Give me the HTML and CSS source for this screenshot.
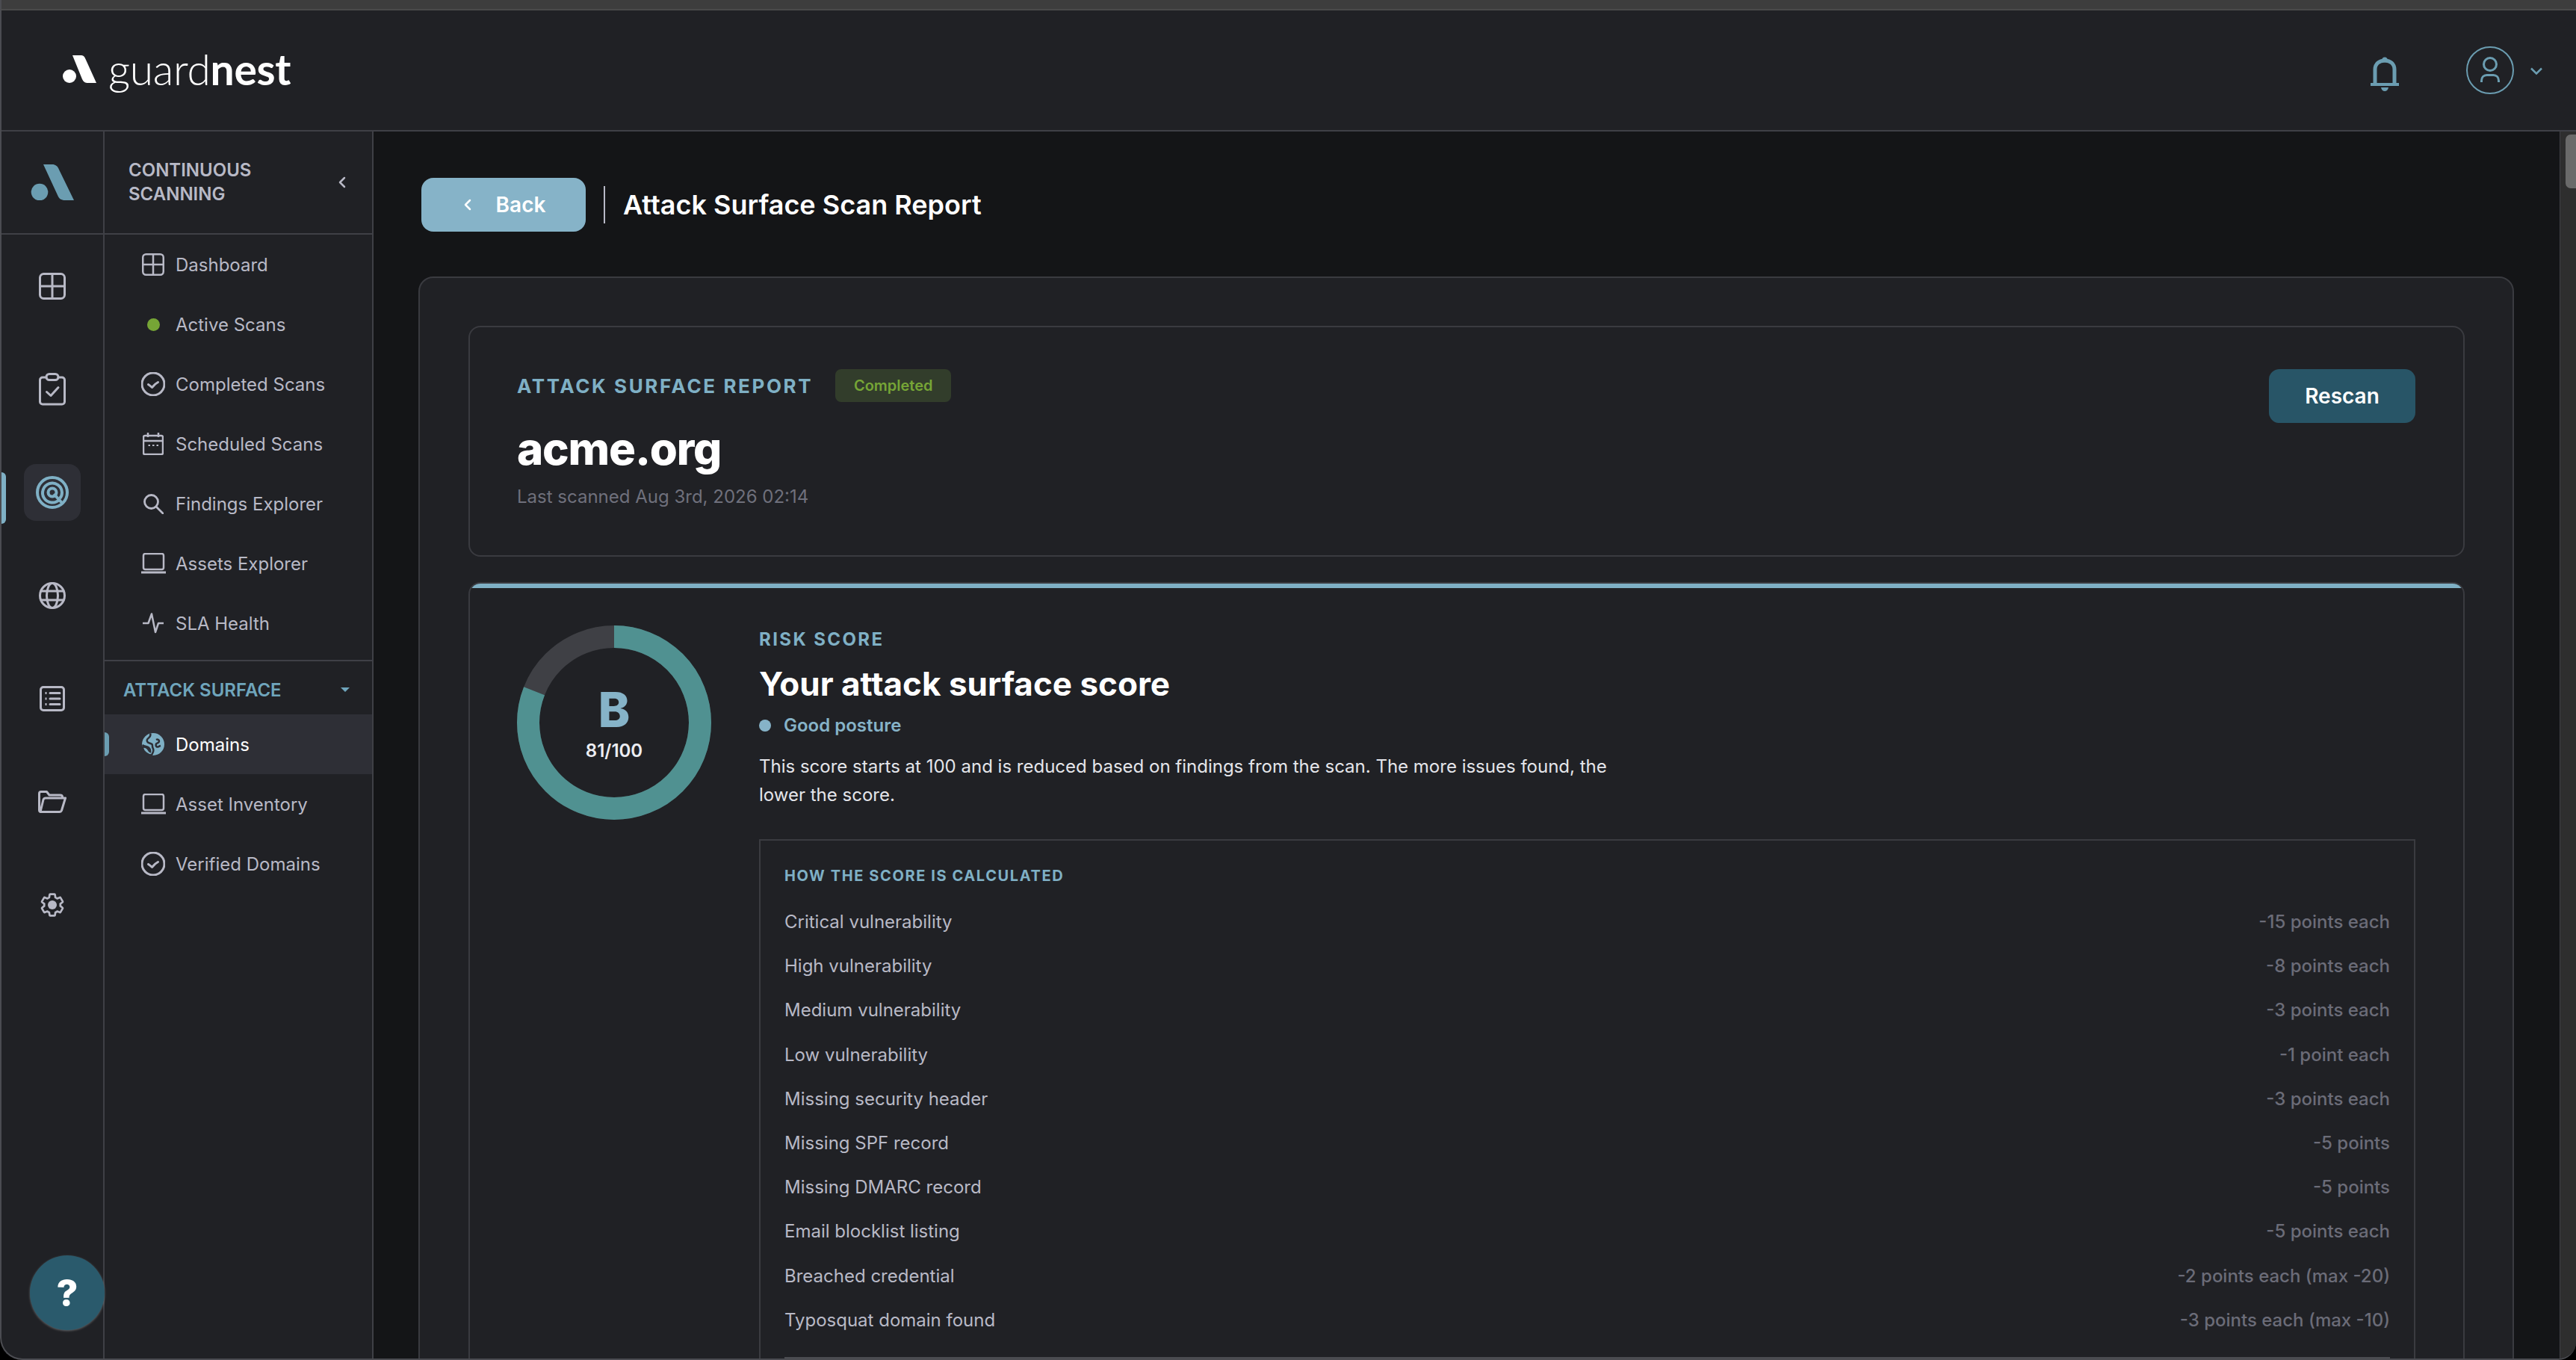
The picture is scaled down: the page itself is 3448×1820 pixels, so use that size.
FILE: index.html
```html
<!DOCTYPE html>
<html lang="en">
<head>
<meta charset="utf-8">
<title>Attack Surface Scan Report</title>
<link rel="stylesheet" href="styles.css">
</head>
<body>
<svg class="defs" aria-hidden="true">
  <symbol id="i-grid" viewBox="0 0 36 36"><rect x="1.5" y="1.5" width="33" height="33" rx="5"/><path d="M18 2v32M2 18h32"/></symbol>
  <symbol id="i-check" viewBox="0 0 32 32"><circle cx="16" cy="16" r="15"/><path d="M9.5 16.5c2 1.2 3.5 2.6 5 4 2.2-3 4.5-5.2 8-7"/></symbol>
  <symbol id="i-laptop" viewBox="0 0 33 28"><rect x="3" y="1" width="27" height="21" rx="2.5"/><path d="M0 26h33" stroke-width="3"/></symbol>
  <symbol id="i-chev" viewBox="0 0 16 16"><path d="M11 2 5 8l6 6"/></symbol>
</svg>
<div class="window">
  <div class="topstrip"></div>
  <header class="topbar">
    <div class="brand">
      <svg class="brand-mark" viewBox="0 0 46 38" fill="#fff"><circle cx="9" cy="29" r="9"/><path d="M13 1h11c3 0 5 1 6.500 5L45 38H34c-4 0-6-1-8-5z"/></svg>
      <span class="brand-name">guard<b>nest</b></span>
    </div>
    <div class="topbar-actions">
      <svg class="bell" viewBox="0 0 38 47"><path class="bell-body" d="M6 37V17C6 9.500 11.500 5 19 5s13 4.500 13 12v20"/><path class="bell-base" d="M0 37h38"/><circle class="bell-fill" cx="19" cy="4" r="3.600"/><path class="bell-fill" d="M14 41h10c-.5 3-2.500 5-5 5s-4.500-2-5-5z"/></svg>
      <svg class="avatar" viewBox="0 0 64 64"><circle cx="32" cy="32" r="31"/><circle cx="32" cy="24" r="8.500"/><path d="M20.500 48v-2c0-4.500 3-7.500 7-7.500h9c4 0 7 3 7 7.500v2"/></svg>
      <svg class="caret-down" viewBox="0 0 16 10"><path d="M1 1.500 8 8.500l7-7"/></svg>
    </div>
  </header>
  <div class="body">
    <nav class="rail">
      <div class="rail-logo">
        <svg class="rail-mark" viewBox="0 0 58 48"><circle cx="12" cy="37" r="11.300"/><path d="M17 0h12c4 0 7 2 9 7l20 41H46c-5 0-8-2-10-7z"/></svg>
      </div>
      <div class="rail-item"><svg class="ic ic36"><use href="#i-grid"/></svg></div>
      <div class="rail-item">
        <svg class="ic ic-clip" viewBox="0 0 36 44"><path d="M10 6H5a3.500 3.500 0 0 0-3.500 3.500v29A3.500 3.500 0 0 0 5 42h26a3.500 3.500 0 0 0 3.500-3.500v-29A3.500 3.500 0 0 0 31 6h-5"/><rect x="10" y="1.500" width="16" height="8" rx="4"/><path d="M10.500 25.500l5.500 5 10-11" stroke-width="4"/></svg>
      </div>
      <div class="rail-item is-active">
        <span class="rail-bar"></span>
        <span class="rail-chip"><svg class="radar" viewBox="0 0 44 44"><circle cx="22" cy="22" r="20"/><path d="M31.500 31.500A13 13 0 1 1 35 22c0 3-1 6-3 8"/><circle cx="22" cy="22" r="5.500"/><path d="M24 24l11 12"/></svg></span>
      </div>
      <div class="rail-item">
        <svg class="ic ic36" viewBox="0 0 36 36"><circle cx="18" cy="18" r="16.500"/><ellipse cx="18" cy="18" rx="7.500" ry="16.500"/><path d="M3 12h30M3 24h30"/></svg>
      </div>
      <div class="rail-item">
        <svg class="ic ic-list" viewBox="0 0 34 34"><rect x="1.500" y="1.500" width="31" height="31" rx="3.500"/><path d="M14 9.500h13M14 17h13M14 24.500h13"/><path class="dots" d="M7.500 8h2v3h-2zM7.500 15.500h2v3h-2zM7.500 23h2v3h-2z"/></svg>
      </div>
      <div class="rail-item">
        <svg class="ic ic-folder" viewBox="0 0 38 30"><path d="M3 28c-1 0-1.500-.8-1.500-2V4c0-1.500 1-2.500 2.500-2.500h7.500L15 6h14.500c2 0 3 1 3 2.500V9"/><path d="M3 28.500h25.500c1.500 0 2.500-.8 3-2L36.500 10H10c-1.500 0-2.500.8-3 2z"/></svg>
      </div>
      <div class="rail-item">
        <svg class="ic ic36" viewBox="0 0 24 24"><path class="gear" d="M19.140 12.940c.04-.3.06-.61.06-.94 0-.32-.02-.64-.07-.94l2.030-1.580c.18-.14.23-.41.12-.61l-1.920-3.320c-.12-.22-.37-.29-.59-.22l-2.390.96c-.5-.38-1.030-.7-1.620-.94l-.36-2.540c-.04-.24-.24-.41-.48-.41h-3.840c-.24 0-.43.17-.47.41l-.36 2.540c-.59.24-1.130.57-1.620.94l-2.390-.96c-.22-.08-.47 0-.59.22L2.740 8.870c-.12.21-.08.47.12.61l2.030 1.580c-.05.3-.09.63-.09.94s.02.64.07.94l-2.030 1.580c-.18.14-.23.41-.12.61l1.920 3.320c.12.22.37.29.59.22l2.390-.96c.5.38 1.030.7 1.620.94l.36 2.540c.05.24.24.41.48.41h3.840c.24 0 .44-.17.47-.41l.36-2.540c.59-.24 1.130-.56 1.620-.94l2.390.96c.22.08.47 0 .59-.22l1.920-3.320c.12-.22.07-.47-.12-.61z"/><circle class="dots" cx="12" cy="12" r="4"/></svg>
      </div>
      <button class="help">?</button>
    </nav>
    <aside class="subnav">
      <div class="subnav-head">
        <span>CONTINUOUS<br>SCANNING</span>
        <svg class="ic collapse"><use href="#i-chev"/></svg>
      </div>
      <ul class="navlist">
        <li class="navitem"><span class="navicon"><svg class="ic ic30"><use href="#i-grid"/></svg></span>Dashboard</li>
        <li class="navitem"><span class="navicon"><span class="live-dot"></span></span>Active Scans</li>
        <li class="navitem"><span class="navicon"><svg class="ic ic32"><use href="#i-check"/></svg></span>Completed Scans</li>
        <li class="navitem"><span class="navicon"><svg class="ic ic-cal" viewBox="0 0 28 30"><rect x="1" y="4" width="26" height="25" rx="2"/><path d="M1 11h26M7 0v6M21 0v6"/><path class="dashes" d="M7.500 17h2.500M13 17h2.500M18.500 17H21"/></svg></span>Scheduled Scans</li>
        <li class="navitem"><span class="navicon"><svg class="ic ic-search" viewBox="0 0 27 27"><circle cx="10.500" cy="10.500" r="9"/><path d="M17 17l9 9"/></svg></span>Findings Explorer</li>
        <li class="navitem"><span class="navicon"><svg class="ic ic-laptop"><use href="#i-laptop"/></svg></span>Assets Explorer</li>
        <li class="navitem"><span class="navicon"><svg class="ic ic-pulse" viewBox="0 0 28 28"><path d="M0 14h7.500L12 1.500 17 26l4-12h7"/></svg></span>SLA Health</li>
      </ul>
      <div class="section-head">
        <span>ATTACK SURFACE</span>
        <svg class="section-caret" viewBox="0 0 12 6"><path d="M0 0h12L6 6z"/></svg>
      </div>
      <ul class="navlist">
        <li class="navitem is-current"><span class="navmark"></span><span class="navicon"><svg class="ic30 globe-fill" viewBox="0 0 30 30"><circle cx="15" cy="15" r="15"/><path d="M11 .5c1 2.500 0 4.500-2 6-2.500 1.500-3 4-1 6 2 1.500 4 1 5.500 2.500 1 1.500 0 3 1 5 1 1.500 1 3.500.5 5l-2 4.500C7 29.500 2 25 .5 19 3 18 6 19 7.500 20.500 9 22 9 24 11 25c.5-2-.5-4-2-5.500C7 18 4 18 .5 16" class="globe-cut"/><path d="M19 9c2-1 4 0 4 2s-2 2-3.500 3c-1.500 1.500-1 3.500.5 4.500 1.500.5 3-1 5-1.500" class="globe-cut"/></svg></span>Domains</li>
        <li class="navitem"><span class="navicon"><svg class="ic ic-laptop"><use href="#i-laptop"/></svg></span>Asset Inventory</li>
        <li class="navitem"><span class="navicon"><svg class="ic ic32"><use href="#i-check"/></svg></span>Verified Domains</li>
      </ul>
    </aside>
    <main class="main">
      <div class="pagehead">
        <button class="back"><svg class="ic back-chev"><use href="#i-chev"/></svg>Back</button>
        <span class="vr"></span>
        <h1 class="pagetitle">Attack Surface Scan Report</h1>
      </div>
      <section class="panel">
        <div class="card card-head">
          <div class="head-text">
            <div class="head-meta">
              <span class="eyebrow">ATTACK SURFACE REPORT</span>
              <span class="badge">Completed</span>
            </div>
            <h2 class="domain">acme.org</h2>
            <p class="scanned">Last scanned Aug 3rd, 2026 02:14</p>
          </div>
          <button class="rescan">Rescan</button>
        </div>
        <div class="card card-score">
          <div class="score-strip"></div>
          <div class="score-body">
            <div class="donut">
              <svg class="donut-svg" viewBox="0 0 260 260">
                <circle class="donut-track" cx="130" cy="130" r="115"/>
                <circle class="donut-value" cx="130" cy="130" r="115" pathLength="100" stroke-dasharray="81 100"/>
              </svg>
              <div class="donut-label">
                <span class="grade">B</span>
                <span class="points">81/100</span>
              </div>
            </div>
            <div class="score-text">
              <div class="eyebrow small">RISK SCORE</div>
              <h3 class="score-title">Your attack surface score</h3>
              <div class="posture"><span class="posture-dot"></span>Good posture</div>
              <p class="score-desc">This score starts at 100 and is reduced based on findings from the scan. The more issues found, the lower the score.</p>
              <div class="calc">
                <div class="calc-title">HOW THE SCORE IS CALCULATED</div>
                <div class="calc-row"><span>Critical vulnerability</span><span class="pts">-15 points each</span></div>
                <div class="calc-row"><span>High vulnerability</span><span class="pts">-8 points each</span></div>
                <div class="calc-row"><span>Medium vulnerability</span><span class="pts">-3 points each</span></div>
                <div class="calc-row"><span>Low vulnerability</span><span class="pts">-1 point each</span></div>
                <div class="calc-row"><span>Missing security header</span><span class="pts">-3 points each</span></div>
                <div class="calc-row"><span>Missing SPF record</span><span class="pts">-5 points</span></div>
                <div class="calc-row"><span>Missing DMARC record</span><span class="pts">-5 points</span></div>
                <div class="calc-row"><span>Email blocklist listing</span><span class="pts">-5 points each</span></div>
                <div class="calc-row"><span>Breached credential</span><span class="pts">-2 points each (max -20)</span></div>
                <div class="calc-row"><span>Typosquat domain found</span><span class="pts">-3 points each (max -10)</span></div>
                <div class="calc-total"></div>
              </div>
            </div>
          </div>
        </div>
      </section>
    </main>
    <div class="scrollbar"><div class="thumb"></div></div>
  </div>
</div>
</body>
</html>
```
FILE: styles.css
```css
* { box-sizing: border-box; }
html, body { margin: 0; height: 100%; overflow: hidden; background: #000; }
body { font-family: Inter, "Liberation Sans", sans-serif; color: #b8b9c6; font-size: 24px; }
h1, h2, h3, p, ul { margin: 0; padding: 0; }
ul { list-style: none; }
button { font-family: inherit; border: 0; cursor: pointer; }
.defs { display: none; }

.window {
  height: 100vh; display: flex; flex-direction: column; overflow: hidden;
  background: #202125; border-left: 2px solid #4b4c51; border-bottom: 2px solid #4b4c51;
  border-radius: 0 0 24px 30px;
}
.topstrip { height: 14px; flex: none; margin-left: -2px; background: #3d3d3d; border-bottom: 2px solid #4a4a4a; }

.topbar {
  height: 162px; flex: none; display: flex; align-items: center; justify-content: space-between;
  border-bottom: 2px solid #3f4046; padding: 0 45px 0 82px; background: #202125;
}
.brand { display: flex; align-items: center; gap: 15px; margin-bottom: 4px; }
.brand-mark { width: 46px; height: 38px; }
.brand-name { font-family: Lato, sans-serif; font-weight: 300; font-size: 57px; line-height: 60px; color: #fff; letter-spacing: -.3px; }
.brand-name b { font-weight: 700; }
.topbar-actions { display: flex; align-items: center; }
.bell { width: 38px; height: 47px; fill: none; margin-right: 90px; margin-top: 10px; }
.bell-body { stroke: #6b9db1; stroke-width: 5; }
.bell-base { stroke: #6b9db1; stroke-width: 4; }
.bell-fill { fill: #6b9db1; }
.avatar { width: 64px; height: 64px; fill: none; stroke: #6b9db1; stroke-width: 2; margin-right: 22px; }
.avatar circle + circle, .avatar path { stroke-width: 3; }
.caret-down { width: 16px; height: 10px; fill: none; stroke: #6b9db1; stroke-width: 2.500; margin-top: 2px; }

.body { flex: 1; min-height: 0; display: flex; }

.rail { width: 138px; flex: none; border-right: 2px solid #3f4046; position: relative; }
.rail-logo { height: 138px; border-bottom: 2px solid #3f4046; display: flex; align-items: center; justify-content: center; }
.rail-mark { width: 58px; height: 48px; fill: #6b9db1; margin-left: 0; }
.rail-item { height: 138px; display: flex; align-items: center; justify-content: center; position: relative; color: #b8b9c6; }
.rail-bar { position: absolute; left: -2px; top: 42px; width: 8px; height: 69px; background: #7fb0c5; border-radius: 0 6px 6px 0; }
.rail-chip { width: 76px; height: 76px; border-radius: 16px; background: #2e2f36; display: flex; align-items: center; justify-content: center; }
.radar { width: 44px; height: 44px; fill: none; stroke: #7fb0c5; stroke-width: 4; }
.ic { fill: none; stroke: currentColor; stroke-width: 3; stroke-linecap: round; stroke-linejoin: round; }
.ic36 { width: 36px; height: 36px; }
.ic30 { width: 30px; height: 30px; }
.ic32 { width: 32px; height: 32px; }
.ic-clip { width: 36px; height: 44px; }
.ic-list { width: 34px; height: 34px; }
.ic-folder { width: 38px; height: 30px; }
.ic-cal { width: 28px; height: 30px; stroke-width: 2.500; stroke-linecap: butt; }
.ic-search { width: 27px; height: 27px; stroke-width: 2.800; }
.ic-laptop { width: 33px; height: 28px; stroke-width: 2.500; stroke-linecap: butt; }
.ic-pulse { width: 28px; height: 28px; stroke-width: 2.500; }
.ic-clip path, .ic-clip rect { stroke-width: 3; }
.dots { fill: currentColor; stroke: none; }
.dashes { stroke-width: 2; stroke-linecap: butt; }
.gear { stroke-width: 1.800; }
.help {
  position: absolute; left: 38px; bottom: 38px; width: 100px; height: 100px; z-index: 3;
  border-radius: 50%; background: #2a5a6c; color: #fff; font-size: 50px; font-weight: 800; line-height: 100px; padding: 0;
  box-shadow: 0 1px 3px rgba(255,255,255,.3);
}

.subnav { width: 360px; flex: none; border-right: 2px solid #3f4046; }
.subnav-head {
  height: 138px; border-bottom: 2px solid #3f4046; display: flex; align-items: center; justify-content: space-between;
  padding: 0 32px 0 32px; font-weight: 600; line-height: 32px; letter-spacing: 0; color: #b8b9c6;
}
.collapse { width: 16px; height: 16px; stroke-width: 2.500; }
.navitem { height: 80px; display: flex; align-items: center; position: relative; color: #b8b9c6; font-size: 24px; letter-spacing: 0; margin-top: 0; }
.navicon { width: 94px; flex: none; padding-left: 36px; display: flex; align-items: center; justify-content: center; margin-right: 1px; }
.navlist:first-of-type { padding-bottom: 9px; border-bottom: 2px solid #3f4046; }
.live-dot { width: 17px; height: 17px; border-radius: 50%; background: #76a536; }
.section-head {
  height: 71px; padding: 5px 30px 0 25px; display: flex; align-items: center; justify-content: space-between;
  color: #6fa5bc; font-weight: 600; font-size: 24px;
}
.section-caret { width: 12px; height: 6px; fill: #6fa5bc; }
.navitem.is-current { background: #2e2f36; color: #fff; }
.navmark { position: absolute; left: 0; top: 24px; width: 6px; height: 32px; background: #6b9db1; border-radius: 0 6px 6px 0; }
.globe-fill { fill: #7fb0c5; }
.globe-cut { fill: none; stroke: #2e2f36; stroke-width: 2.500; }

.main { flex: 1; min-width: 0; background: #141517; padding: 62px 61px 0 60px; overflow: hidden; }
.pagehead { display: flex; align-items: center; height: 72px; margin-left: 4px; margin-bottom: 60px; }
.back {
  width: 220px; height: 72px; border-radius: 16px; background: #86b3c8; color: #fff; font-size: 28px; font-weight: 600;
  display: flex; align-items: center; justify-content: center; gap: 30px;
}
.back-chev { width: 16px; height: 16px; stroke-width: 2.500; }
.vr { width: 2px; height: 50px; background: #b8b9c6; margin: 0 24px; }
.pagetitle { font-size: 36px; font-weight: 600; color: #fff; }

.panel { background: #202125; border: 2px solid #3a3b40; border-radius: 20px; padding: 64px 64px 0 65px; display: flex; flex-direction: column; gap: 34px; }
.card { border: 2px solid #3a3b40; border-radius: 16px; background: #202125; overflow: hidden; }
.card-head { height: 309px; padding: 56px 64px 0 63px; display: flex; justify-content: space-between; align-items: flex-start; }
.head-meta { display: flex; align-items: center; gap: 30px; height: 44px; }
.eyebrow { color: #7fb0c5; font-weight: 700; font-size: 26px; letter-spacing: .1em; }
.eyebrow.small { font-size: 24px; line-height: 30px; }
.badge { height: 44px; width: 155px; display: flex; align-items: center; justify-content: center; border-radius: 8px; background: #323d2b; color: #76a536; font-size: 20px; font-weight: 600; }
.domain { font-size: 60px; font-weight: 800; color: #fff; line-height: 72px; letter-spacing: -.02em; margin-top: 26px; }
.scanned { color: #6f707c; font-size: 24px; line-height: 30px; margin-top: 14px; }
.rescan { width: 196px; height: 72px; border-radius: 14px; background: #285567; color: #fff; font-size: 28px; font-weight: 600; }

.card-score { flex: 1; }
.score-strip { height: 6px; background: #7fb0c5; }
.score-body { display: flex; gap: 64px; padding: 50px 64px 0 63px; }
.donut { width: 260px; height: 260px; flex: none; position: relative; }
.donut-svg { width: 260px; height: 260px; fill: none; display: block; transform: rotate(-90deg); }
.donut-track { stroke: #3f4045; stroke-width: 30; }
.donut-value { stroke: #509191; stroke-width: 30; }
.donut-label { position: absolute; inset: 0; display: flex; flex-direction: column; align-items: center; justify-content: center; }
.grade { font-size: 64px; font-weight: 800; color: #86b3c8; line-height: 72px; }
.points { font-size: 24px; font-weight: 600; color: #ecedf2; line-height: 30px; margin-top: 4px; }
.score-text { flex: 1; min-width: 0; padding-top: 4px; }
.score-title { font-size: 44px; font-weight: 700; color: #fff; line-height: 56px; margin-top: 16px; }
.posture { display: flex; align-items: center; gap: 17px; color: #86b3c8; font-size: 24px; font-weight: 600; line-height: 30px; margin-top: 13px; }
.posture-dot { width: 16px; height: 16px; border-radius: 50%; background: #86b3c8; }
.score-desc { color: #e4e5ea; font-size: 24px; line-height: 38px; max-width: 1160px; margin-top: 21px; }
.calc { border: 2px solid #3a3b40; margin-top: 40px; padding: 32px; }
.calc-title { color: #7fb0c5; font-size: 20px; font-weight: 700; letter-spacing: .08em; line-height: 30px; margin-bottom: 17px; }
.calc-row { display: flex; justify-content: space-between; height: 59.200px; align-items: center; color: #b8b9c6; }
.pts { color: #6b6c78; font-weight: 500; }
.calc-total { border-top: 2px solid #4b4c51; margin-top: 20px; height: 40px; }

.scrollbar { width: 22px; flex: none; background: #2e2e2e; border-left: 1px solid #3f4046; padding: 4px 0 0 7px; }
.thumb { height: 72px; background: #6a6a6a; border-radius: 7px 0 0 7px; }
```
